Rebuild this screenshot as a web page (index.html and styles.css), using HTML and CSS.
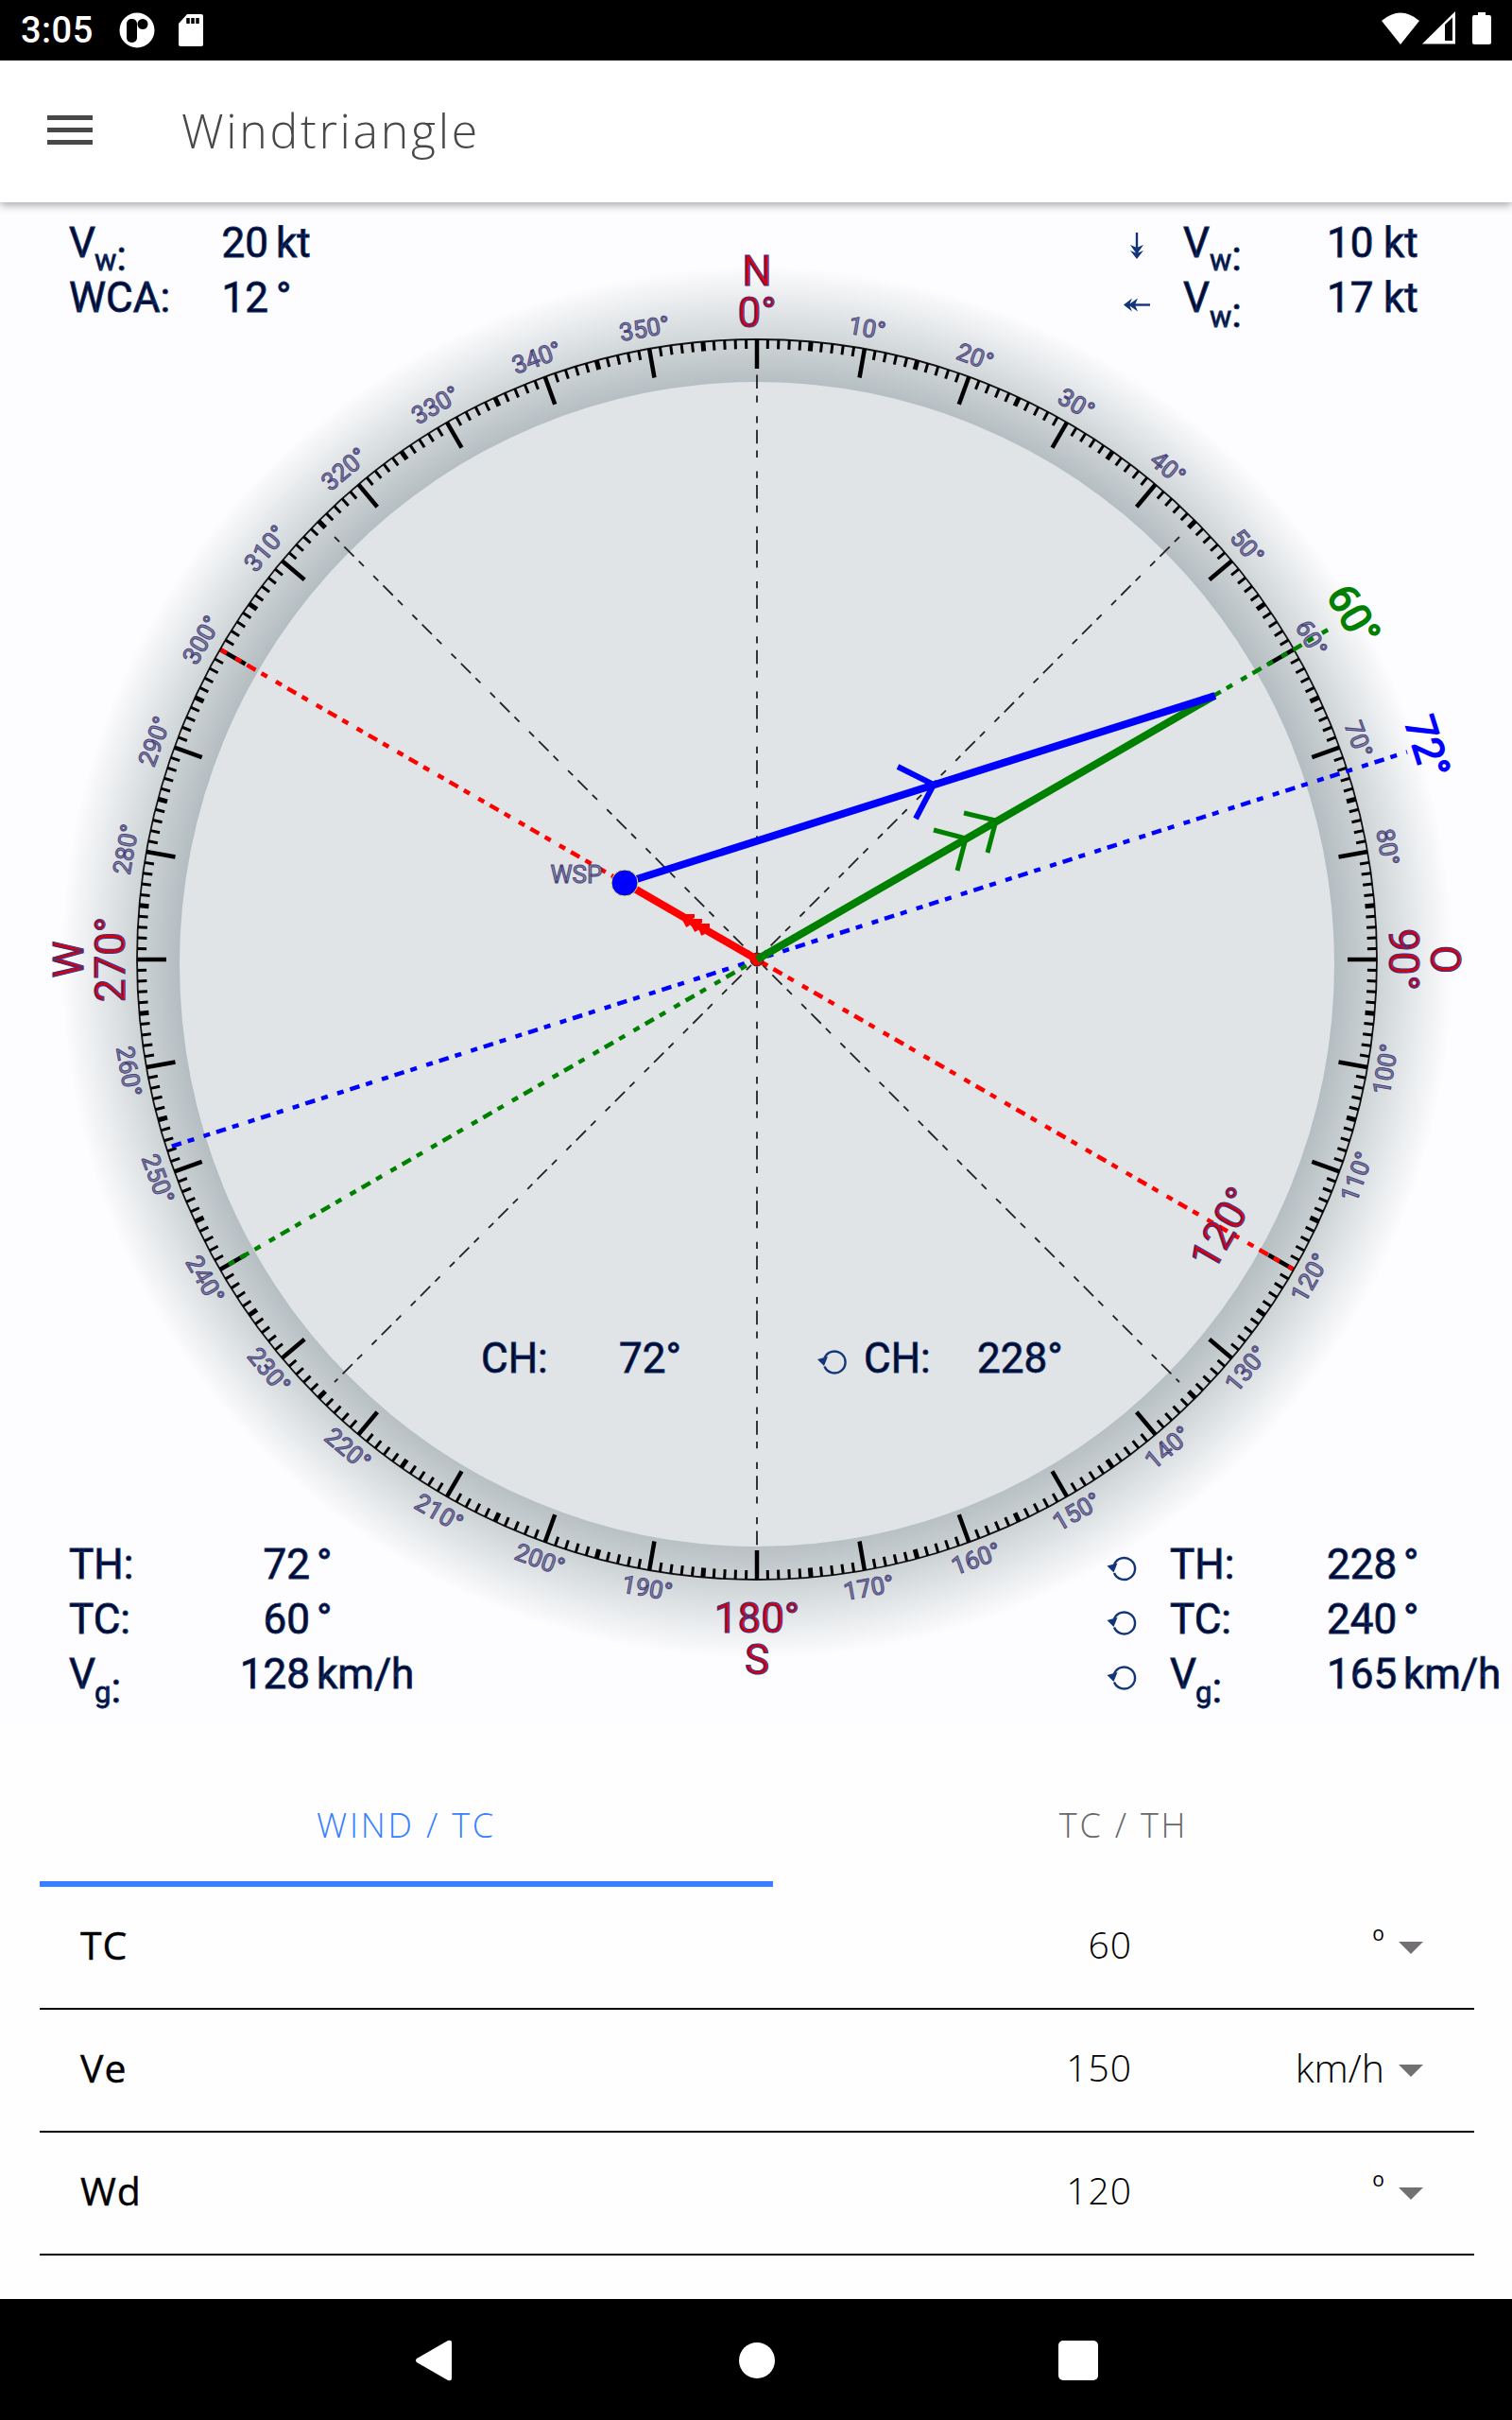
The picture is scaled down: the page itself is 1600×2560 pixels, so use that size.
FILE: index.html
```html
<!DOCTYPE html>
<html lang="en">
<head>
    <meta charset="UTF-8">
    <meta name="viewport" content="width=device-width, initial-scale=1.0">
    <title>Windtriangle</title>
    <link rel="stylesheet" href="styles.css">
</head>
<body>
    <div class="statusbar">
        <span class="clock">3:05</span>
        <svg class="status-icon app" width="38" height="38" viewBox="0 0 38 38">
            <circle cx="19" cy="19" r="18.5" fill="#fff"/>
            <rect x="8" y="7" width="11" height="25" rx="5" fill="#000"/>
            <circle cx="25" cy="12.500" r="5.500" fill="#000"/>
        </svg>
        <svg class="status-icon sd" width="28" height="36" viewBox="0 0 28 36">
            <path d="M10 1h15a2 2 0 0 1 2 2v30a2 2 0 0 1-2 2H3a2 2 0 0 1-2-2V11z" fill="#fff"/>
            <path d="M11 5v6M16 5v6M21 5v6" stroke="#000" stroke-width="3.500"/>
        </svg>
        <div class="status-right">
            <svg width="40" height="34" viewBox="0 0 40 34"><path d="M0 9Q20-8 40 9L20 34z" fill="#fff"/></svg>
            <svg width="36" height="35" viewBox="0 0 36 35">
                <path d="M0 34.500L35 0v34.500z" fill="#fff"/>
                <path d="M24 14l8-7.500V31h-8z" fill="#000"/>
            </svg>
            <svg class="battery" width="20" height="34" viewBox="0 0 20 34"><path d="M6 0h8v3h4a2 2 0 0 1 2 2v27a2 2 0 0 1-2 2H2a2 2 0 0 1-2-2V5a2 2 0 0 1 2-2h4z" fill="#fff"/></svg>
        </div>
    </div>

    <div class="header">
        <div class="menu"><span></span><span></span><span></span></div>
        <h1>Windtriangle</h1>
    </div>

    <svg class="compass" viewBox="0 214 1600 1609">
        <defs>
            <radialGradient id="glow" gradientUnits="userSpaceOnUse" cx="801" cy="1018" r="736">
                <stop offset="0.830" stop-color="#b4bdc1"/>
                <stop offset="0.890" stop-color="#cdd3d5"/>
                <stop offset="0.950" stop-color="#e7eaec"/>
                <stop offset="1" stop-color="#fdfcfe"/>
            </radialGradient>
            <g id="turn">
                <path d="M-10.500 4.500A11.500 11.500 0 1 0 -10.500 -4.500" fill="none" stroke="#12357a" stroke-width="2.400"/>
                <path d="M-18 -3L-7 -6L-11 4z" fill="#12357a"/>
            </g>
            <g id="wind-arrow">
                <path d="M0 -14V12" stroke="#12357a" stroke-width="2.400"/>
                <path d="M-7 -1L0 2L7 -1L0 9zM-7 5L0 8L7 5L0 14z" fill="#12357a"/>
            </g>
        </defs>

        <circle cx="801" cy="1018" r="736" fill="url(#glow)"/>
        <ellipse cx="801" cy="1020" rx="611" ry="616" class="face"/>

        <g class="axis">
            <line x1="801" y1="382" x2="801" y2="1648"/>
            <line x1="354" y1="568" x2="1248" y2="1462"/>
            <line x1="1248" y1="568" x2="354" y2="1462"/>
        </g>

        <circle cx="801" cy="1015" r="656" class="ring"/>
        <g id="ticks"></g>
        <g id="labels"></g>

        <g class="bearing">
            <line class="red" x1="233.800" y1="687.500" x2="1368.200" y2="1342.500" stroke-dashoffset="17.700"/>
            <line class="blue" x1="181.800" y1="1212.600" x2="1489" y2="795.500"/>
            <line class="green" x1="242" y1="1337.700" x2="1407.200" y2="665" stroke-dashoffset="35.400"/>
        </g>
        <text class="cardinal" transform="translate(801 1015) rotate(-60)" y="584">120°</text>
        <text class="course green" transform="translate(801 1015) rotate(60)" y="-714">60°</text>
        <text class="course blue" transform="translate(801 1015) rotate(72.4)" y="-729">72°</text>

        <text class="small" x="610" y="934">WSP</text>
        <circle cx="801" cy="1015" r="7" fill="#f00" stroke="#222" stroke-width="1"/>
        <g class="vector">
            <path d="M661 934L801 1015" class="red" stroke-width="8"/>
            <path d="M735 969L722 969L728 980M743 974L731 974L737 985M751 979L740 979L744 989" class="red" stroke-width="4"/>
            <path d="M801 1015L1285 736" class="green" stroke-width="8"/>
            <path d="M1020 860L1054 868L1045 902M988 878L1022 887L1013 921" class="green" stroke-width="5"/>
            <path d="M661 934L1286 736" class="blue" stroke-width="8"/>
            <path d="M950 811L988 830L969 866" class="blue" stroke-width="6"/>
        </g>
        <circle cx="661" cy="934" r="14" fill="#00f" stroke="#e8e85a" stroke-width="1"/>

        <g class="readout">
            <text x="73" y="272">V</text><text class="sub" x="100" y="286">w<tspan class="colon">:</tspan></text>
            <text x="284" y="272" class="num">20</text><text x="292" y="272">kt</text>
            <text x="73" y="330">WCA:</text>
            <text x="284" y="330" class="num">12</text><text x="292" y="330">°</text>

            <use href="#wind-arrow" x="1203" y="260"/>
            <text x="1252" y="272">V</text><text class="sub" x="1280" y="286">w<tspan class="colon">:</tspan></text>
            <text x="1404" y="272">10</text><text x="1464" y="272">kt</text>
            <use href="#wind-arrow" transform="translate(1203 322.500) rotate(90)"/>
            <text x="1252" y="330">V</text><text class="sub" x="1280" y="346">w<tspan class="colon">:</tspan></text>
            <text x="1404" y="330">17</text><text x="1464" y="330">kt</text>

            <text x="509" y="1452">CH:</text><text x="655" y="1452">72°</text>
            <use href="#turn" x="883" y="1441"/>
            <text x="914" y="1452">CH:</text><text x="1034" y="1452">228°</text>

            <text x="73" y="1670">TH:</text>
            <text x="328" y="1670" class="num">72</text><text x="335" y="1670">°</text>
            <text x="73" y="1728">TC:</text>
            <text x="328" y="1728" class="num">60</text><text x="335" y="1728">°</text>
            <text x="73" y="1786">V</text><text class="sub" x="100" y="1801">g<tspan class="colon">:</tspan></text>
            <text x="328" y="1786" class="num">128</text><text x="335" y="1786">km/h</text>

            <use href="#turn" x="1189.500" y="1659.500"/>
            <text x="1238" y="1670">TH:</text><text x="1404" y="1670">228</text><text x="1485" y="1670">°</text>
            <use href="#turn" x="1189.500" y="1717"/>
            <text x="1238" y="1728">TC:</text><text x="1404" y="1728">240</text><text x="1485" y="1728">°</text>
            <use href="#turn" x="1189.500" y="1775"/>
            <text x="1238" y="1786">V</text><text class="sub" x="1265" y="1801">g<tspan class="colon">:</tspan></text>
            <text x="1404" y="1786">165</text><text x="1485" y="1786">km/h</text>
        </g>
    </svg>

    <div class="container">
        <div class="tabs">
            <div class="tab active">WIND / TC</div>
            <div class="tab">TC / TH</div>
        </div>
        <div class="row">
            <label>TC</label>
            <span class="value">60</span>
            <span class="unit degree">o</span>
            <span class="caret"></span>
        </div>
        <div class="row">
            <label>Ve</label>
            <span class="value">150</span>
            <span class="unit">km/h</span>
            <span class="caret"></span>
        </div>
        <div class="row">
            <label>Wd</label>
            <span class="value">120</span>
            <span class="unit degree">o</span>
            <span class="caret"></span>
        </div>
    </div>

    <div class="navbar">
        <svg width="38" height="44" viewBox="0 0 38 44"><path d="M1 20L34 1q4-1 4 2v38q0 3-4 2L1 24q-2-2 0-4z" fill="#fff"/></svg>
        <svg class="home" width="38" height="38" viewBox="0 0 38 38"><circle cx="19" cy="19" r="19" fill="#fff"/></svg>
        <svg width="42" height="42" viewBox="0 0 42 42"><rect width="42" height="42" rx="5" fill="#fff"/></svg>
    </div>

    <script src="compass.js"></script>
</body>
</html>
```
FILE: styles.css
```css
body {
    font-family: 'Open Sans', sans-serif;
    background-color: #fefefe;
    margin: 0;
    padding: 0;
    width: 1600px;
    height: 2560px;
    display: flex;
    flex-direction: column;
    overflow: hidden;
}
.statusbar {
    height: 64px;
    background: #000;
    color: white;
    display: flex;
    align-items: center;
    box-sizing: border-box;
    padding: 0 22px;
    flex-shrink: 0;
}
.clock {
    font-family: Roboto, sans-serif;
    font-size: 38px;
    font-weight: 500;
    letter-spacing: 0.5px;
    width: 104px;
}
.status-icon.sd {
    margin-left: 24px;
}
.status-right {
    margin-left: auto;
    display: flex;
    align-items: center;
    gap: 3px;
    margin-top: -5px;
}
.status-right .battery {
    margin-left: 14px;
}
.header {
    height: 150px;
    background: white;
    display: flex;
    align-items: center;
    box-sizing: border-box;
    padding: 0 0 3px 50px;
    box-shadow: 0 3px 9px rgba(0, 0, 0, 0.35);
    position: relative;
    flex-shrink: 0;
}
.menu {
    width: 48px;
    display: flex;
    flex-direction: column;
    gap: 8px;
    margin-right: 94px;
}
.menu span {
    height: 5px;
    background: #4a474b;
}
.header h1 {
    font-size: 50px;
    font-weight: 300;
    color: #4a474b;
    margin: 0;
    letter-spacing: 2.7px;
}
.compass {
    width: 1600px;
    height: 1609px;
    background: #fdfcfe;
    font-family: Roboto, sans-serif;
    flex-shrink: 0;
    display: block;
}
.face {
    fill: #e1e4e6;
}
.ring {
    fill: none;
    stroke: #111;
    stroke-width: 1.8;
}
.axis line {
    stroke: #222;
    stroke-width: 1.8;
    stroke-dasharray: 14.56 7.28 7.28;
    stroke-dashoffset: 43.7;
}
.tick {
    stroke: #000;
    stroke-width: 3;
}
.tick.five {
    stroke-width: 5;
}
.tick.ten {
    stroke-width: 4.5;
}
.small {
    font-size: 26px;
    text-anchor: middle;
    fill: #8a8aa0;
    stroke: #46417c;
    stroke-width: 1;
}
.cardinal {
    font-size: 44px;
    text-anchor: middle;
    fill: #d8000c;
    stroke: #46307c;
    stroke-width: 1.2;
}
.course {
    font-size: 44px;
    text-anchor: middle;
    stroke-width: 1.6;
}
.bearing line {
    stroke-width: 4.5;
    stroke-dasharray: 10.6 7.07 7.07;
}
.vector path {
    fill: none;
}
.red {
    stroke: #f00;
}
.blue {
    stroke: #00f;
}
.green {
    stroke: #008000;
}
.course.blue {
    fill: #00f;
}
.course.green {
    fill: #008000;
}
.readout {
    font-size: 44px;
}
.readout text {
    fill: #000a2c;
    stroke: #12306c;
    stroke-width: 0.9;
}
.readout .num {
    text-anchor: end;
}
.readout .sub {
    font-size: 31px;
}
.readout .colon {
    font-size: 44px;
}
.container {
    padding: 0 40px 0 42px;
    height: 609px;
    flex-shrink: 0;
}
.tabs {
    display: flex;
    height: 173px;
}
.tab {
    width: 776px;
    box-sizing: border-box;
    padding-top: 46px;
    line-height: 124px;
    text-align: center;
    font-size: 36px;
    font-weight: 300;
    letter-spacing: 2.8px;
    color: #6a676b;
}
.tab:last-child {
    width: 742px;
}
.tab.active {
    color: #3880ff;
    border-bottom: 6px solid #3880ff;
}
.row {
    height: 130px;
    box-sizing: border-box;
    border-bottom: 2px solid #000;
    display: flex;
    align-items: center;
    padding: 0 54px 0 43px;
    font-size: 41px;
    color: #000;
}
.row label {
    width: 600px;
    font-weight: 500;
    letter-spacing: 1px;
    padding-bottom: 7px;
    -webkit-text-stroke: 0.4px #000;
}
.value {
    width: 513px;
    text-align: right;
    font-weight: 300;
    font-size: 39px;
    letter-spacing: 1px;
    padding-bottom: 7px;
}
.unit {
    width: 267px;
    text-align: right;
    font-weight: 300;
    font-size: 41px;
    padding-bottom: 7px;
}
.unit.degree {
    font-size: 21px;
    font-weight: 400;
    margin-top: -24px;
}
.caret {
    margin-left: 15px;
    border: 13px solid transparent;
    border-top-color: #727073;
    border-bottom: none;
}
.navbar {
    height: 128px;
    background: #000;
    display: flex;
    align-items: center;
    justify-content: space-between;
    box-sizing: border-box;
    padding: 2px 438px 0 440px;
    flex-shrink: 0;
}
.home {
    margin-left: 4px;
}
```
FILE: compass.js
```js
const NS = "http://www.w3.org/2000/svg";
const CX = 801, CY = 1015, R = 656;
const ticks = document.getElementById("ticks");
const labels = document.getElementById("labels");
const names = { 0: "N", 90: "O", 180: "S", 270: "W" };

function addLabel(text, cls, deg, r) {
    // labels on the lower half are turned round so they stay readable
    const flip = deg > 90 && deg < 270;
    const t = document.createElementNS(NS, "text");
    t.setAttribute("class", cls);
    t.setAttribute("transform", `translate(${CX} ${CY}) rotate(${flip ? deg - 180 : deg})`);
    t.setAttribute("y", flip ? r : -r);
    t.textContent = text;
    labels.appendChild(t);
}

for (let d = 0; d < 360; d++) {
    const len = d % 10 === 0 ? 31 : 10;
    const line = document.createElementNS(NS, "line");
    line.setAttribute("class", "tick" + (d % 10 === 0 ? " ten" : d % 5 === 0 ? " five" : ""));
    line.setAttribute("transform", `translate(${CX} ${CY}) rotate(${d})`);
    line.setAttribute("y1", -R);
    line.setAttribute("y2", -R + len);
    ticks.appendChild(line);

    if (d % 10 !== 0) continue;
    const flip = d > 90 && d < 270;
    if (d in names) {
        addLabel(d + "°", "cardinal", d, flip ? 712 : 669);
        addLabel(names[d], "cardinal", d, flip ? 756 : 713);
    } else {
        addLabel(d + "°", "small", d - 0.1, flip ? 684 : 669);
    }
}
```
